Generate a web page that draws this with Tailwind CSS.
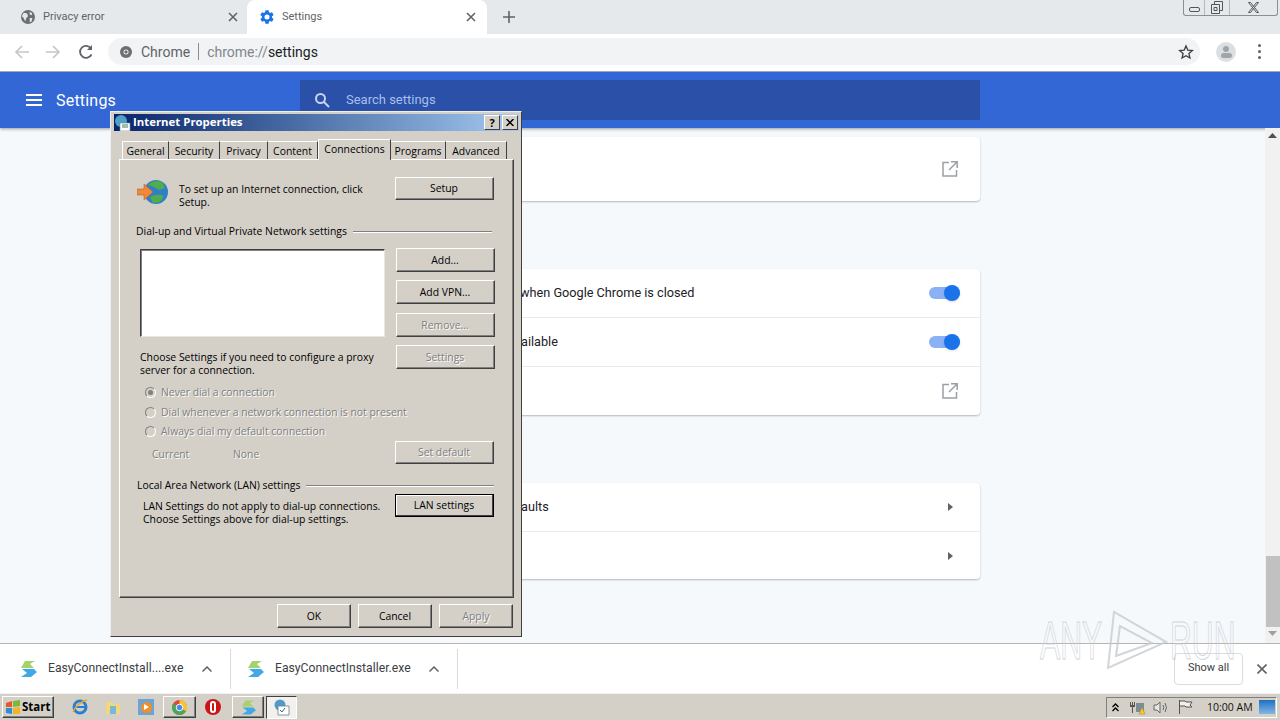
<!doctype html>
<html>
<head>
  <title>Settings</title>
  <meta charset="UTF-8">
  <script src="https://cdn.jsdelivr.net/npm/@tailwindcss/browser@4"></script>
</head>
<body class="relative w-[1280px] h-[720px] overflow-hidden font-['Roboto',sans-serif] bg-white">

  <!-- chrome tab strip -->
  <div class="flex h-[34px] bg-[#e6e9ec] text-[11px] text-[#5f6368]">
    <div class="flex items-center w-[247px] pl-[21px] pr-[9px]">
      <svg class="w-[14px] h-[14px] shrink-0" viewBox="0 0 16 16"><circle cx="8" cy="8" r="8" fill="#6b6f73"/><path d="M3 3l4 1 1 3-2 2-1 4-2-4-2-2zM10 2l3 2-1 2-2-1zM10 9l3 0-1 4-2 1z" fill="#e6e9ec"/></svg>
      <span class="ml-2 pt-[1px] grow">Privacy error</span>
      <svg class="w-[10px] h-[10px]" viewBox="0 0 10 10"><path d="M1 1l8 8M9 1l-8 8" stroke="#5f6368" stroke-width="1.6"/></svg>
    </div>
    <div class="flex items-center w-[240px] pl-[13px] pr-[11px] bg-white rounded-t-lg">
      <svg class="w-[14px] h-[14px] shrink-0" viewBox="2 2 20 20"><path fill="#1a73e8" d="M19.14 12.94c.04-.3.06-.61.06-.94 0-.32-.02-.64-.07-.94l2.03-1.58a.49.49 0 0 0 .12-.61l-1.92-3.32a.488.488 0 0 0-.59-.22l-2.39.96c-.5-.38-1.03-.7-1.62-.94l-.36-2.54a.484.484 0 0 0-.48-.41h-3.84c-.24 0-.43.17-.47.41l-.36 2.54c-.59.24-1.13.57-1.62.94l-2.39-.96c-.22-.08-.47 0-.59.22L2.74 8.87c-.12.21-.08.47.12.61l2.03 1.58c-.05.3-.09.63-.09.94s.02.64.07.94l-2.03 1.58a.49.49 0 0 0-.12.61l1.92 3.32c.12.22.37.29.59.22l2.39-.96c.5.38 1.03.7 1.62.94l.36 2.54c.05.24.24.41.48.41h3.84c.24 0 .44-.17.47-.41l.36-2.54c.59-.24 1.13-.56 1.62-.94l2.39.96c.22.08.47 0 .59-.22l1.92-3.32c.12-.22.07-.47-.12-.61l-2.01-1.58zM12 15.6A3.6 3.6 0 1 1 12 8.4a3.6 3.6 0 0 1 0 7.2z"/></svg>
      <span class="ml-[8px] pt-[1px] grow">Settings</span>
      <svg class="w-[10px] h-[10px]" viewBox="0 0 10 10"><path d="M1 1l8 8M9 1l-8 8" stroke="#5f6368" stroke-width="1.6"/></svg>
    </div>
    <svg class="w-[12px] h-[12px] ml-4 self-center" viewBox="0 0 12 12"><path d="M6 0v12M0 6h12" stroke="#5f6368" stroke-width="1.6"/></svg>
    <!-- window buttons -->
    <div class="ml-auto mr-[2px] flex h-[16px] w-[95px] border border-t-0 border-[#8a8f94] rounded-b-[3px]">
      <div class="w-[21px] flex items-center justify-center pt-[3px] border-r border-[#b5b9bc]"><div class="w-[11px] h-[5px] border border-[#555] rounded-[2px]"></div></div>
      <div class="w-[25px] flex items-center justify-center border-r border-[#b5b9bc]"><svg class="w-[12px] h-[13px]" viewBox="0 0 12 13" fill="none" stroke="#555"><path d="M3.5 3V.5h8v9H9"/><path d="M.5 3.5h8v9h-8z"/><path d="M3 6.500h3v3H3z"/></svg></div>
      <div class="grow flex items-center justify-center"><svg class="w-[11px] h-[11px]" viewBox="0 0 11 11" fill="none" stroke="#555"><path d="M.5 .5h2l8 10h-2zM10.500 .5h-2l-8 10h2z"/></svg></div>
    </div>
  </div>

  <!-- chrome toolbar -->
  <div class="flex items-center h-[38px] bg-white border-b border-[#9fa8b3] pb-[2px]">
    <svg class="w-[16px] h-[16px] ml-[14px]" viewBox="0 0 16 16" fill="none" stroke="#c4c7ca" stroke-width="1.7"><path d="M15 8H2M8 2L2 8l6 6"/></svg>
    <svg class="w-[16px] h-[16px] ml-[15px]" viewBox="0 0 16 16" fill="none" stroke="#c4c7ca" stroke-width="1.7"><path d="M1 8h13M8 2l6 6-6 6"/></svg>
    <svg class="w-[16px] h-[16px] ml-[17px]" viewBox="0 0 16 16" fill="none" stroke="#5f6368" stroke-width="1.8"><path d="M13.5 10.5A6 6 0 1 1 13 4.500"/><path d="M14 1v5H9" fill="#5f6368" stroke="none"/></svg>
    <div class="flex items-center ml-[14px] w-[1092px] h-[27px] rounded-full bg-[#f1f3f4] text-[14px]">
      <svg class="w-[12px] h-[12px] ml-3 shrink-0" viewBox="0 0 12 12"><circle cx="6" cy="6" r="6" fill="#6b6f73"/><circle cx="6" cy="6" r="2.5" fill="#fff"/><circle cx="6" cy="6" r="1.7" fill="#6b6f73"/></svg>
      <span class="ml-[9px] pt-[1px] text-[#5f6368]">Chrome</span>
      <span class="ml-2 w-px h-[17px] bg-[#8a8f94]"></span>
      <span class="ml-2 pt-[1px] text-[#80868b]">chrome://<span class="text-[#202124]">settings</span></span>
      <svg class="w-[16px] h-[16px] ml-auto mr-[6px]" viewBox="0 0 24 24" fill="none" stroke="#3c4043" stroke-width="2"><path d="M12 3l2.7 6.2 6.8.6-5.1 4.5 1.5 6.7-5.900-3.500-5.900 3.500 1.500-6.700L2.500 9.800l6.800-.6z"/></svg>
    </div>
    <div class="ml-[16px] w-[20px] h-[20px] rounded-full bg-[#dcdfe2] flex flex-col items-center justify-center gap-[1px]">
      <div class="w-[6px] h-[6px] rounded-full bg-[#a0a4a8]"></div>
      <div class="w-[11px] h-[5px] rounded-full bg-[#a0a4a8]"></div>
    </div>
    <div class="ml-[22px] flex flex-col gap-[3px]">
      <div class="w-[3px] h-[3px] rounded-full bg-[#5f6368]"></div>
      <div class="w-[3px] h-[3px] rounded-full bg-[#5f6368]"></div>
      <div class="w-[3px] h-[3px] rounded-full bg-[#5f6368]"></div>
    </div>
  </div>

  <!-- settings page -->
  <div class="relative h-[571px] overflow-hidden bg-[#f6f9fc]">
    <div class="flex items-center h-[56px] bg-[#3367d6] shadow-[0_1px_3px_rgba(60,64,67,0.5)]">
      <svg class="w-[16px] h-[12px] ml-[26px] shrink-0" viewBox="0 0 16 12" fill="#fff"><path d="M0 0h16v2H0zM0 5h16v2H0zM0 10h16v2H0z"/></svg>
      <span class="ml-[14px] w-[244px] text-[16px] tracking-[0.2px] text-white pt-[1px]">Settings</span>
      <div class="flex items-center w-[680px] h-[40px] bg-[#2a50a8]">
        <svg class="w-[16px] h-[16px] ml-[14px]" viewBox="0 0 16 16" fill="none" stroke="#c5d4f2" stroke-width="2"><circle cx="6.5" cy="6.5" r="4.5"/><path d="M10 10l5 5"/></svg>
        <span class="ml-4 text-[13px] text-[#a9bfeb]">Search settings</span>
      </div>
    </div>
    <div class="flex">
      <div class="ml-[300px] w-[680px] pt-[9px] text-[12.7px] text-[#202124]">
        <div class="flex items-center justify-end h-[64px] pr-[22px] bg-white rounded shadow-[0_1px_2px_rgba(60,64,67,0.35)]">
          <svg class="w-[16px] h-[16px]" viewBox="0 0 16 16" fill="none" stroke="#9aa0a6" stroke-width="1.5"><path d="M7 1.500H1v13.500h13.500V9M9 .8h6.200V7M15 1L7 9"/></svg>
        </div>
        <div class="h-[68px]"></div>
        <div class="bg-white rounded shadow-[0_1px_2px_rgba(60,64,67,0.35)]">
          <div class="flex items-center justify-between h-[48px] pl-[220px] pr-5">
            <span>when Google Chrome is closed</span>
            <div class="relative w-[31px] h-[12px] rounded-full bg-[#8ab0f5]"><div class="absolute right-0 -top-[2px] w-[16px] h-[16px] rounded-full bg-[#1a73e8] shadow"></div></div>
          </div>
          <div class="flex items-center justify-between h-[49px] pl-[221px] pr-5 border-t border-[#e8eaed]">
            <span>ailable</span>
            <div class="relative w-[31px] h-[12px] rounded-full bg-[#8ab0f5]"><div class="absolute right-0 -top-[2px] w-[16px] h-[16px] rounded-full bg-[#1a73e8] shadow"></div></div>
          </div>
          <div class="flex items-center justify-end h-[49px] pr-[22px] border-t border-[#e8eaed]">
            <svg class="w-[16px] h-[16px]" viewBox="0 0 16 16" fill="none" stroke="#9aa0a6" stroke-width="1.5"><path d="M7 1.500H1v13.500h13.500V9M9 .8h6.200V7M15 1L7 9"/></svg>
          </div>
        </div>
        <div class="h-[68px]"></div>
        <div class="bg-white rounded shadow-[0_1px_2px_rgba(60,64,67,0.35)]">
          <div class="flex items-center justify-between h-[48px] pl-[221px] pr-[27px]">
            <span>aults</span>
            <svg class="w-[5px] h-[8px]" viewBox="0 0 5 8" fill="#5f6368"><path d="M0 0l5 4-5 4z"/></svg>
          </div>
          <div class="flex items-center justify-end h-[48px] pr-[27px] border-t border-[#e8eaed]">
            <svg class="w-[5px] h-[8px]" viewBox="0 0 5 8" fill="#5f6368"><path d="M0 0l5 4-5 4z"/></svg>
          </div>
        </div>
      </div>
      <!-- scrollbar -->
      <div class="ml-auto w-[15px] h-[515px] flex flex-col items-center bg-[#f1f1f1]">
        <svg class="w-[9px] h-[5px] mt-[5px]" viewBox="0 0 9 5" fill="#505050"><path d="M0 5l4.5-5 4.500 5z"/></svg>
        <div class="mt-[418px] w-[14px] h-[71px] bg-[#c1c1c1]"></div>
        <svg class="w-[9px] h-[5px] mt-[4px]" viewBox="0 0 9 5" fill="#a0a0a0"><path d="M0 0l4.5 5 4.500-5z"/></svg>
      </div>
    </div>
  </div>

  <!-- download shelf -->
  <div class="flex items-center h-[50px] bg-white border-t border-[#b5b5b5] text-[12.2px] text-[#3c4043]">
    <div class="flex items-center w-[231px] h-[40px] border-r border-[#d8dadc] pl-[19px]">
      <svg class="w-[18px] h-[16px] shrink-0" viewBox="0 0 18 16"><path d="M6 0h10l-5 3 4 4H2z" fill="#a5d26a"/><path d="M3 8h12l3 3-6 5H2l6-4z" fill="#3fa9e6"/></svg>
      <span class="ml-[11px]">EasyConnectInstall....exe</span>
      <svg class="w-[10px] h-[6px] ml-[19px]" viewBox="0 0 10 6" fill="none" stroke="#5f6368" stroke-width="1.5"><path d="M.5 5.500L5 1l4.500 4.500"/></svg>
    </div>
    <div class="flex items-center w-[227px] h-[40px] border-r border-[#d8dadc] pl-[15px]">
      <svg class="w-[18px] h-[16px] shrink-0" viewBox="0 0 18 16"><path d="M6 0h10l-5 3 4 4H2z" fill="#a5d26a"/><path d="M3 8h12l3 3-6 5H2l6-4z" fill="#3fa9e6"/></svg>
      <span class="ml-[11px]">EasyConnectInstaller.exe</span>
      <svg class="w-[10px] h-[6px] ml-[18px]" viewBox="0 0 10 6" fill="none" stroke="#5f6368" stroke-width="1.5"><path d="M.5 5.500L5 1l4.500 4.500"/></svg>
    </div>
    <div class="ml-auto flex items-center justify-center w-[69px] h-[32px] border border-[#dadce0] rounded text-[11px]">Show all</div>
    <svg class="w-[10px] h-[10px] mr-[13px] ml-[14px]" viewBox="0 0 10 10"><path d="M.5.5l9 9M9.500.5l-9 9" stroke="#5f6368" stroke-width="1.6"/></svg>
  </div>

  <!-- windows taskbar -->
  <div class="flex items-center h-[27px] bg-[#d4d0c8] border-t border-[#f0f0f0] font-['Open_Sans',sans-serif] text-[10.5px] text-black">
    <div class="flex items-center ml-[2px] w-[52px] h-[22px] pl-[2px] gap-[1px] border border-t-white border-l-white border-r-[#404040] border-b-[#404040] shadow-[inset_-1px_-1px_0_#808080]">
      <svg class="w-[16px] h-[15px] shrink-0" viewBox="0 0 16 15"><path d="M1 3l6-2v6H1z" fill="#e8562a"/><path d="M8 1l7-1v6l-7 1z" fill="#7cb93a"/><path d="M1 8h6v6l-6-1z" fill="#2a8fd8"/><path d="M8 8l7-1v7l-7 0z" fill="#f2b428"/></svg>
      <span class="font-bold text-[11.5px]">Start</span>
    </div>
    <svg class="w-[16px] h-[16px] ml-[18px]" viewBox="0 0 16 16"><circle cx="8" cy="8" r="6" fill="none" stroke="#2a7fd0" stroke-width="3"/><path d="M3 8h10" stroke="#2a7fd0" stroke-width="2"/><path d="M1 13C3 8 9 2 15 1" stroke="#e8a828" stroke-width="1.5" fill="none"/></svg>
    <svg class="w-[16px] h-[15px] ml-[17px]" viewBox="0 0 16 15"><path d="M1 2h6l1 2h7v10H1z" fill="#f3d77e"/><path d="M5 6h6v8H5z" fill="#7ab8d8"/></svg>
    <div class="flex items-center justify-center w-[16px] h-[16px] ml-[17px] bg-[#6aa4d8]"><div class="w-[11px] h-[11px] rounded-full bg-[#f09020] flex items-center justify-center"><div class="w-0 h-0 border-y-[3px] border-y-transparent border-l-[5px] border-l-white"></div></div></div>
    <div class="flex items-center justify-center ml-[9px] w-[33px] h-[22px] border border-t-white border-l-white border-r-[#404040] border-b-[#404040] shadow-[inset_-1px_-1px_0_#808080]">
      <svg class="w-[15px] h-[15px]" viewBox="0 0 16 16"><circle cx="8" cy="8" r="8" fill="#e0483a"/><path d="M8 8L15 12A8 8 0 0 1 5 15.400z" fill="#48a85a"/><path d="M8 8L5 15.400A8 8 0 0 1 1 4z" fill="#48a85a"/><path d="M8 0a8 8 0 0 1 7 12L8 8z" fill="#f6c532"/><circle cx="8" cy="8" r="3.5" fill="#4a8ae8" stroke="#fff"/></svg>
    </div>
    <div class="flex items-center justify-center w-[16px] h-[16px] ml-[9px] rounded-full bg-[#cc1414]"><div class="w-[6px] h-[12px] rounded-full border-2 border-white"></div></div>
    <div class="flex items-center justify-center ml-[11px] w-[32px] h-[22px] border border-t-white border-l-white border-r-[#404040] border-b-[#404040] shadow-[inset_-1px_-1px_0_#808080]">
      <svg class="w-[16px] h-[15px]" viewBox="0 0 18 16"><path d="M6 0h10l-5 3 4 4H2z" fill="#a5d26a"/><path d="M3 8h12l3 3-6 5H2l6-4z" fill="#3fa9e6"/></svg>
    </div>
    <div class="flex items-center justify-center ml-[2px] w-[31px] h-[23px] bg-[#f2f1ee] border border-t-[#404040] border-l-[#404040] border-r-white border-b-white">
      <svg class="w-[17px] h-[17px]" viewBox="0 0 17 17"><circle cx="7" cy="6" r="5.5" fill="#4f9cc8"/><path d="M5 7h11v9H5z" fill="#fff" stroke="#6a7f90" stroke-width=".8"/><path d="M7 11l2 2 3-4" stroke="#3a6a9a" fill="none"/></svg>
    </div>
    <!-- tray -->
    <div class="flex items-center ml-auto mr-[3px] w-[171px] h-[21px] pl-[5px] border border-t-[#808080] border-l-[#808080] border-r-white border-b-white">
      <svg class="w-[7px] h-[9px]" viewBox="0 0 7 9" fill="none" stroke="#000" stroke-width="1.3"><path d="M.5 4l3-3 3 3M.5 8l3-3 3 3"/></svg>
      <svg class="w-[16px] h-[16px] ml-[10px]" viewBox="0 0 16 16"><path d="M1 3h1v3h1V3h1v3h1V3h1v5H4v6H3V8H1z" fill="#555"/><path d="M7 4h8v9H7z" fill="#7d8c96"/><path d="M10 15l3-7 3 7z" fill="#f4cc2e" stroke="#a08010" stroke-width=".5"/></svg>
      <svg class="w-[16px] h-[15px] ml-[8px]" viewBox="0 0 16 15" fill="none" stroke="#666"><path d="M1 5h3l3-3v11l-3-3H1z" fill="#e8e8e8"/><path d="M10 5q1.500 2.500 0 5M12 3q3 4.500 0 9"/></svg>
      <svg class="w-[15px] h-[16px] ml-[9px]" viewBox="0 0 15 16" fill="none" stroke="#555"><path d="M1.500 1v14"/><path d="M2 2h5l1 1h6l-2 3 2 2H8L7 7H2" fill="#f0f0f0"/></svg>
      <span class="ml-[14px] pt-[1px] text-[#111]">10:00 AM</span>
      <div class="ml-auto mr-[1px] w-[16px] h-[14px] bg-gradient-to-b from-[#1d6fc0] to-[#7fb7e6]"></div>
    </div>
  </div>

  <!-- watermark -->
  <div class="absolute left-[1040px] top-[608px] flex items-center pointer-events-none font-['Liberation_Sans',sans-serif] text-[54px] leading-none text-transparent [-webkit-text-stroke:1px_#c8ccd0] opacity-80">
    <span class="w-[64px] scale-x-[0.56] origin-left whitespace-nowrap">ANY</span>
    <svg class="w-[66px] h-[64px]" viewBox="0 0 66 64" fill="none" stroke="#c8ccd0" stroke-width="2"><path d="M4 60L10 4l52 30zM12 48l4-30 32 17z"/></svg>
    <span class="w-[62px] scale-x-[0.56] origin-left whitespace-nowrap">RUN</span>
  </div>

  <!-- internet properties dialog -->
  <div class="absolute left-[110px] top-[111px] w-[412px] h-[526px] flex flex-col bg-[#d4d0c8] pl-[3px] pr-[2px] py-[2px] border border-t-[#f0f0f0] border-l-[#f0f0f0] border-r-[#404040] border-b-[#404040] font-['Open_Sans',sans-serif] text-[10.4px] leading-[13px] text-black">
    <div class="flex items-center h-[17px] pl-[1px] pr-[1px] bg-gradient-to-r from-[#0a246a] to-[#a6caf0]">
      <svg class="w-[16px] h-[16px] shrink-0" viewBox="0 0 16 16"><circle cx="6" cy="6" r="6" fill="#4fa0c8"/><path d="M5 8h10v8H5z" fill="#fff" stroke="#6a8aa0" stroke-width=".6"/><path d="M7 10h6M7 12h6" stroke="#3a7a5a"/></svg>
      <span class="ml-[2px] -mt-[2px] font-bold text-white text-[11.4px]">Internet Properties</span>
      <div class="ml-auto flex items-center justify-center w-[16px] h-[15px] bg-[#d4d0c8] font-bold text-[11px] border border-t-white border-l-white border-r-[#404040] border-b-[#404040]">?</div>
      <div class="ml-[2px] flex items-center justify-center w-[16px] h-[15px] bg-[#d4d0c8] border border-t-white border-l-white border-r-[#404040] border-b-[#404040]">
        <svg class="w-[8px] h-[7px]" viewBox="0 0 8 7"><path d="M.5 0l7 7M7.500 0l-7 7" stroke="#000" stroke-width="1.5"/></svg>
      </div>
    </div>

    <!-- tabs -->
    <div class="flex items-end h-[28px] ml-[8px]">
      <div class="w-[47px] h-[18px] pt-[2px] flex items-center justify-center border-t border-l border-r border-t-white border-l-white border-r-[#404040]">General</div>
      <div class="w-[51px] h-[18px] pt-[2px] flex items-center justify-center border-t border-r border-t-white border-r-[#404040]">Security</div>
      <div class="w-[48px] h-[18px] pt-[2px] flex items-center justify-center border-t border-r border-t-white border-r-[#404040]">Privacy</div>
      <div class="w-[50px] h-[18px] pt-[2px] flex items-center justify-center border-t border-r border-t-white border-r-[#404040]">Content</div>
      <div class="relative z-10 -mb-px w-[73px] h-[21px] pb-[2px] flex items-center justify-center bg-[#d4d0c8] border-t border-l border-r border-t-white border-l-white border-r-[#404040]">Connections</div>
      <div class="w-[55px] h-[18px] pt-[2px] flex items-center justify-center border-t border-r border-t-white border-r-[#404040]">Programs</div>
      <div class="w-[61px] h-[18px] pt-[2px] flex items-center justify-center border-t border-r border-t-white border-r-[#404040]">Advanced</div>
    </div>

    <!-- connections panel -->
    <div class="flex flex-col h-[439px] ml-[5px] mr-[5px] pl-[17px] pr-[19px] pt-[17px] border border-t-white border-l-white border-r-[#404040] border-b-[#404040] shadow-[inset_-1px_-1px_0_#808080]">
      <div class="flex items-start">
        <svg class="w-[34px] h-[26px] mt-[2px] shrink-0" viewBox="0 0 34 26"><circle cx="19" cy="13" r="12" fill="#2f7fc8"/><path d="M11 6q6-6 14-3l3 6-6 2-5-3zM13 18q7-4 14-1l-4 6-7 1z" fill="#4fae4a"/><path d="M0 10h7V5l9 8-9 8v-5H0z" fill="#f0883a" stroke="#c06020" stroke-width=".6"/></svg>
        <p class="ml-[8px] mt-[6px] w-[200px]">To set up an Internet connection, click Setup.</p>
        <div class="ml-auto pr-[1px] flex items-center justify-center w-[99px] h-[23px] border border-t-white border-l-white border-r-[#404040] border-b-[#404040] shadow-[inset_-1px_-1px_0_#808080]">Setup</div>
      </div>

      <div class="flex items-center mt-[16px] mr-[2px] -ml-[1px] h-[13px]">
        <span>Dial-up and Virtual Private Network settings</span>
        <div class="grow ml-[6px] h-[2px] border-t border-b border-t-[#808080] border-b-white"></div>
      </div>

      <div class="flex mt-[11px] ml-[3px] -mr-[1px] justify-between">
        <div class="w-[245px] h-[88px] bg-white border border-t-[#404040] border-l-[#404040] border-r-[#e8e6e0] border-b-[#e8e6e0] shadow-[inset_1px_1px_0_#808080]"></div>
        <div class="flex flex-col gap-[8px] -mt-[1px]">
          <div class="flex items-center justify-center pr-[1px] w-[99px] h-[24px] border border-t-white border-l-white border-r-[#404040] border-b-[#404040] shadow-[inset_-1px_-1px_0_#808080]">Add...</div>
          <div class="flex items-center justify-center pr-[1px] w-[99px] h-[24px] border border-t-white border-l-white border-r-[#404040] border-b-[#404040] shadow-[inset_-1px_-1px_0_#808080]">Add VPN...</div>
          <div class="flex items-center justify-center pr-[1px] w-[99px] h-[24px] mt-[1px] border border-t-white border-l-white border-r-[#404040] border-b-[#404040] shadow-[inset_-1px_-1px_0_#808080] text-[#808080] [text-shadow:1px_1px_0_#fff]">Remove...</div>
        </div>
      </div>

      <div class="flex mt-[8px] ml-[3px] -mr-[1px] justify-between">
        <p class="mt-[6px] w-[245px]">Choose Settings if you need to configure a proxy server for a connection.</p>
        <div class="flex items-center justify-center pr-[1px] w-[99px] h-[24px] border border-t-white border-l-white border-r-[#404040] border-b-[#404040] shadow-[inset_-1px_-1px_0_#808080] text-[#808080] [text-shadow:1px_1px_0_#fff]">Settings</div>
      </div>

      <div class="flex flex-col gap-[7px] mt-[9px] ml-[8px] text-[#808080] [text-shadow:1px_1px_0_#fff]">
        <div class="flex items-center"><div class="w-[11px] h-[11px] rounded-full border border-[#808080] border-r-white border-b-white flex items-center justify-center"><div class="w-[5px] h-[5px] rounded-full bg-[#808080]"></div></div><span class="ml-[5px]">Never dial a connection</span></div>
        <div class="flex items-center"><div class="w-[11px] h-[11px] rounded-full border border-[#808080] border-r-white border-b-white"></div><span class="ml-[5px]">Dial whenever a network connection is not present</span></div>
        <div class="flex items-center -mt-[1px]"><div class="w-[11px] h-[11px] rounded-full border border-[#808080] border-r-white border-b-white"></div><span class="ml-[5px]">Always dial my default connection</span></div>
      </div>

      <div class="flex items-center mt-[3px] ml-[15px] text-[#808080]">
        <span class="w-[81px] mt-[3px] [text-shadow:1px_1px_0_#fff]">Current</span>
        <span class="mt-[3px] [text-shadow:1px_1px_0_#fff]">None</span>
        <div class="ml-auto pr-[1px] flex items-center justify-center w-[99px] h-[23px] border border-t-white border-l-white border-r-[#404040] border-b-[#404040] shadow-[inset_-1px_-1px_0_#808080] [text-shadow:1px_1px_0_#fff]">Set default</div>
      </div>

      <div class="flex items-center mt-[15px] h-[13px]">
        <span>Local Area Network (LAN) settings</span>
        <div class="grow ml-[6px] h-[2px] border-t border-b border-t-[#808080] border-b-white"></div>
      </div>

      <div class="flex mt-[2px] ml-[6px]">
        <p class="mt-[6px] w-[246px]">LAN Settings do not apply to dial-up connections. Choose Settings above for dial-up settings.</p>
        <div class="ml-auto pr-[1px] flex items-center justify-center w-[99px] h-[23px] border border-black shadow-[inset_-1px_-1px_0_#404040,inset_1px_1px_0_#fff]">LAN settings</div>
      </div>
    </div>

    <!-- dialog buttons -->
    <div class="flex justify-end gap-[7px] mt-[6px] mr-[6px]">
      <div class="flex items-center justify-center w-[74px] h-[24px] border border-t-white border-l-white border-r-[#404040] border-b-[#404040] shadow-[inset_-1px_-1px_0_#808080]">OK</div>
      <div class="flex items-center justify-center w-[74px] h-[24px] border border-t-white border-l-white border-r-[#404040] border-b-[#404040] shadow-[inset_-1px_-1px_0_#808080]">Cancel</div>
      <div class="flex items-center justify-center w-[74px] h-[24px] border border-t-white border-l-white border-r-[#404040] border-b-[#404040] shadow-[inset_-1px_-1px_0_#808080] text-[#808080] [text-shadow:1px_1px_0_#fff]">Apply</div>
    </div>
  </div>
</body>
</html>
